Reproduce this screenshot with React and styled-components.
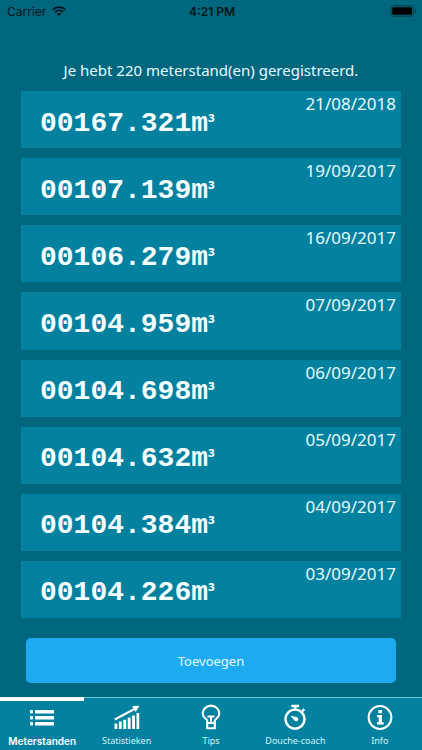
import React, { useState } from "react";
import styled, { createGlobalStyle } from "styled-components";

const GlobalStyle = createGlobalStyle`
  * { box-sizing: border-box; }
  body {
    margin: 0;
    background: #00677f;
    color: #e6fbff;
    font-family: "Noto Sans", "Open Sans", sans-serif;
  }
`;

const Screen = styled.div`
  min-height: 100vh;
  display: flex;
  flex-direction: column;
`;

const StatusBar = styled.header`
  display: grid;
  grid-template-columns: 1fr auto 1fr;
  align-items: center;
  height: 22px;
  padding: 0 5px 0 7px;
  color: #04141a;
  font-family: Inter, sans-serif;
  font-size: 12px;
`;

const Carrier = styled.div`
  display: flex;
  align-items: center;
  gap: 6px;
`;

const Clock = styled.time`
  font-weight: 600;
`;

const Battery = styled.svg`
  justify-self: end;
`;

const Content = styled.main`
  flex: 1;
  display: flex;
  flex-direction: column;
  padding: 37px 21px 14px;
`;

const Summary = styled.p`
  margin: 0 0 10px;
  font-size: 15px;
  line-height: 22px;
  text-align: center;
`;

const ReadingList = styled.ul`
  flex: 1;
  display: flex;
  flex-direction: column;
  gap: 10px;
  margin: 0;
  padding: 0;
  list-style: none;
`;

const ReadingCard = styled.li`
  flex: 1;
  display: flex;
  justify-content: space-between;
  align-items: flex-start;
  padding: 0 5px 0 19px;
  background: #03819e;
`;

const Value = styled.span`
  display: flex;
  align-self: center;
  padding-top: 8px;
  color: #f4feff;
  font-family: "Liberation Mono", monospace;
  font-size: 28px;
  font-weight: 700;
  line-height: 34px;
`;

const Exponent = styled.span`
  font-family: "Noto Sans", sans-serif;
  font-size: 18px;
  line-height: 30px;
`;

const ReadingDate = styled.time`
  font-size: 17px;
  line-height: 26px;
`;

const AddButton = styled.button`
  height: 45px;
  margin: 20px 5px 0;
  border: 0;
  border-radius: 5px;
  background: #1eaaf1;
  color: #e6fbff;
  font: inherit;
  font-size: 13px;
`;

const TabBar = styled.nav`
  display: grid;
  grid-template-columns: repeat(5, 1fr);
  height: 53px;
  background: #03819e;
`;

const Tab = styled.a`
  display: flex;
  flex-direction: column;
  align-items: center;
  border-top: ${(p) => (p.$active ? "4px solid #ffffff" : "1px solid #6fc3d4")};
  padding-top: ${(p) => (p.$active ? "3px" : "6px")};
  color: ${(p) => (p.$active ? "#ffffff" : "#d3f4fa")};
  font-family: ${(p) => (p.$active ? "Inter, sans-serif" : "inherit")};
  font-size: ${(p) => (p.$active ? "10px" : "9px")};
  font-weight: ${(p) => (p.$active ? 600 : 400)};
  line-height: 14px;
  text-decoration: none;
  white-space: nowrap;
`;

const TabIcon = styled.svg`
  display: block;
  width: 28px;
  height: 28px;
  margin-bottom: 2px;
  color: #ffffff;
`;

const readings = [
  ["00167.321", "21/08/2018"],
  ["00107.139", "19/09/2017"],
  ["00106.279", "16/09/2017"],
  ["00104.959", "07/09/2017"],
  ["00104.698", "06/09/2017"],
  ["00104.632", "05/09/2017"],
  ["00104.384", "04/09/2017"],
  ["00104.226", "03/09/2017"],
];

const ListIcon = () => (
  <TabIcon viewBox="0 0 28 28" fill="currentColor" aria-hidden="true">
    {[6, 12, 18].map((y) => (
      <g key={y}>
        <rect x="2" y={y} width="3" height="3.6" rx=".8" />
        <rect x="7" y={y} width="19" height="3.6" rx=".4" />
      </g>
    ))}
  </TabIcon>
);

const ChartIcon = () => (
  <TabIcon viewBox="0 0 28 28" fill="currentColor" aria-hidden="true">
    <path d="M1.5 19.5h2.9V25H1.5zM5.9 17.6h2.9V25H5.9zM10.3 15.7h2.9V25h-2.9zM14.7 13.5h2.9V25h-2.9zM19.1 11.5H22V25h-2.9zM23.5 9h2.7v16h-2.7z" />
    <path d="M1.8 15.5 21.5 5" stroke="currentColor" strokeWidth="2" />
    <path d="m19.2 2 7.3-.3-3.8 6.4z" />
  </TabIcon>
);

const BulbIcon = () => (
  <TabIcon viewBox="0 0 28 28" fill="none" stroke="currentColor" strokeWidth="2.1" aria-hidden="true">
    <path d="M10.2 19v-2.4c0-1.3-4.5-2.9-4.5-7.1a8.3 7.9 0 0 1 16.6 0c0 4.2-4.5 5.8-4.5 7.1V19z" />
    <path d="M10.2 19v5.3h7.6V19M14 19v-6.6M10.4 12.5h7.2" />
  </TabIcon>
);

const StopwatchIcon = () => (
  <TabIcon viewBox="0 0 28 28" fill="none" stroke="currentColor" aria-hidden="true">
    <circle cx="14" cy="15.1" r="9.5" strokeWidth="2.4" />
    <path d="M10.3 2h7.8M14.2 2v4M21 7.5l2.3-2.3" strokeWidth="2.4" />
    <path d="m9.5 11.8 6 1.2a2.2 2.2 0 1 1-2.3 3.3z" fill="currentColor" stroke="none" />
  </TabIcon>
);

const InfoIcon = () => (
  <TabIcon viewBox="0 0 28 28" fill="none" stroke="currentColor" aria-hidden="true">
    <circle cx="14" cy="13.5" r="11.4" strokeWidth="2" />
    <path d="M12.4 6h3.5v3.2h-3.5zM11 11h4.9v7.3h1.8v2.2H11v-2.2h1.7v-5.1H11z" fill="currentColor" stroke="none" />
  </TabIcon>
);

const tabs = [
  ["Meterstanden", ListIcon],
  ["Statistieken", ChartIcon],
  ["Tips", BulbIcon],
  ["Douche-coach", StopwatchIcon],
  ["Info", InfoIcon],
];

export default function App() {
  const [active, setActive] = useState("Meterstanden");
  return (
    <Screen>
      <GlobalStyle />
      <StatusBar>
        <Carrier>
          Carrier
          <svg width="14" height="10" viewBox="0 0 14 10" fill="none" stroke="currentColor" strokeWidth="1.9" aria-label="Wi-Fi">
            <path d="M.8 3.6a9 9 0 0 1 12.4 0M3 6a5.8 5.8 0 0 1 8 0" />
            <path d="m7 10-2.2-2.3a3.2 3.2 0 0 1 4.4 0z" fill="currentColor" stroke="none" />
          </svg>
        </Carrier>
        <Clock>4:21 PM</Clock>
        <Battery width="27" height="12" viewBox="0 0 27 12" aria-label="Batterij">
          <rect x=".8" y=".8" width="22.6" height="10.4" rx="2.4" fill="none" stroke="#033c4a" />
          <rect x="2.2" y="2.2" width="19.8" height="7.6" rx="1.2" fill="#000" />
          <path d="M24.8 4v4q1.5-.6 1.5-2t-1.5-2z" fill="#033c4a" />
        </Battery>
      </StatusBar>
      <Content>
        <Summary>Je hebt 220 meterstand(en) geregistreerd.</Summary>
        <ReadingList>
          {readings.map(([value, date]) => (
            <ReadingCard key={date}>
              <Value>
                {value}m<Exponent>³</Exponent>
              </Value>
              <ReadingDate>{date}</ReadingDate>
            </ReadingCard>
          ))}
        </ReadingList>
        <AddButton type="button">Toevoegen</AddButton>
      </Content>
      <TabBar>
        {tabs.map(([label, Icon]) => (
          <Tab key={label} href="#" $active={label === active} onClick={() => setActive(label)}>
            <Icon />
            {label}
          </Tab>
        ))}
      </TabBar>
    </Screen>
  );
}
